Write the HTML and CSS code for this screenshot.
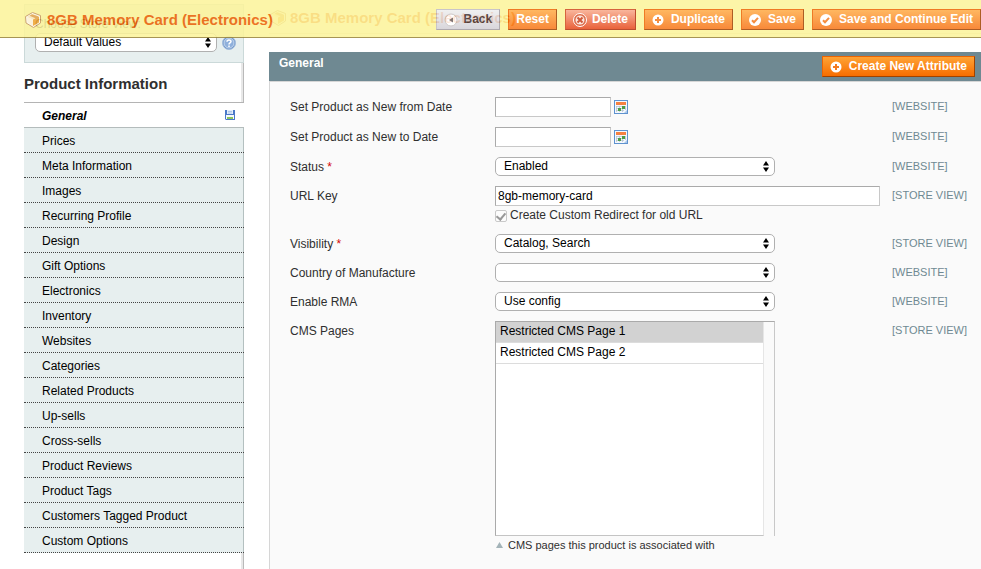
FILE: index.html
```html
<!DOCTYPE html>
<html lang="en">
<head>
<meta charset="utf-8">
<title>8GB Memory Card (Electronics)</title>
<link rel="stylesheet" href="styles.css">
</head>
<body>
<svg class="defs" aria-hidden="true">
  <symbol id="box" viewBox="0 0 18 18">
    <path d="M8.500 1.500l8 3v7.500l-7 4.500-7.500-4.500L1.500 5.500z" fill="#fff8e6" stroke="#c9995a"/>
    <path d="M3 6l5.500-3L15 5.500 9 8.500z" fill="#fbe6b8"/>
    <path d="M3 6l6 2.500v6.500l-5.500-3.500z" fill="#fff3d8"/>
    <path d="M9 8.500l6-3v6L9 15z" fill="#f0a530"/>
    <path d="M5.500 4.700l6 2.500v2.500l2.500-1.300V5.200L8 3.200z" fill="#e3a24a"/>
  </symbol>
  <symbol id="plus" viewBox="0 0 12 12">
    <circle cx="6" cy="6" r="5.500" fill="#fff"/>
    <path d="M6 3v6M3 6h6" stroke="#f47b20" stroke-width="2"/>
  </symbol>
  <symbol id="check" viewBox="0 0 12 12">
    <circle cx="6" cy="6" r="6" fill="#fff"/>
    <path d="M3 6.200l2 2L9 3.800" fill="none" stroke="#f47b20" stroke-width="2"/>
  </symbol>
  <symbol id="cross" viewBox="0 0 14 14">
    <circle cx="7" cy="7" r="6.500" fill="#d9532c" stroke="#fff"/>
    <circle cx="7" cy="7" r="4.500" fill="#fbe3da"/>
    <path d="M4.500 4.500l5 5M9.500 4.500l-5 5" stroke="#c8401c" stroke-width="2"/>
  </symbol>
  <symbol id="back" viewBox="0 0 14 14">
    <circle cx="7" cy="7" r="6" fill="#fff" stroke="#c5bfbf"/>
    <path d="M9 4.500v5L5 7z" fill="#6d6262"/>
  </symbol>
  <symbol id="calendar" viewBox="0 0 14 14">
    <path d="M0 0h14v14H0z" fill="#5f92cf"/>
    <path d="M1 1h12v12H1z" fill="#f4f8fd"/>
    <path d="M10 13l3-3v3z" fill="#a9c8ea"/>
    <path d="M2 2h10v3H2z" fill="#f58142"/>
    <path d="M2 6.500h10M2 8.500h10M2 10.500h8M2.500 6v6M5.500 6v6M8.500 6v6M11.500 6v4" stroke="#b4bfce" stroke-width=".7"/>
    <path d="M8 6h3v3H8zM4 8h3v3H4z" fill="#4f9d45"/>
  </symbol>
  <symbol id="arrows" viewBox="0 0 6 11">
    <path d="M3 0l3 4.500H0zM3 11l3-4.500H0z" fill="#000"/>
  </symbol>
</svg>

<header class="toolbar">
  <h1 class="title"><svg class="i18"><use href="#box"/></svg>8GB Memory Card (Electronics)</h1>
  <div class="actions">
    <button class="btn btn-back" type="button"><svg class="i14"><use href="#back"/></svg>Back</button>
    <button class="btn" type="button">Reset</button>
    <button class="btn btn-delete" type="button"><svg class="i14"><use href="#cross"/></svg>Delete</button>
    <button class="btn btn-icon" type="button"><svg class="i12"><use href="#plus"/></svg>Duplicate</button>
    <button class="btn btn-icon" type="button"><svg class="i12"><use href="#check"/></svg>Save</button>
    <button class="btn btn-icon" type="button"><svg class="i12"><use href="#check"/></svg>Save and Continue Edit</button>
  </div>
</header>

<div class="page">
  <aside class="sidebar">
    <div class="switcher">
      <label for="store">Choose Store View:</label>
      <div class="switcher-row">
        <span class="select"><select id="store"><option>Default Values</option></select><svg class="arrows"><use href="#arrows"/></svg></span>
        <svg class="i14" viewBox="0 0 14 14"><circle cx="7" cy="7" r="6.500" fill="#6d94c9" stroke="#a3bcdc"/><circle cx="7" cy="7" r="5" fill="#8fb0dc" stroke="#d5e3f3" stroke-width=".8"/><path d="M5 5.700C5 3.400 9 3.400 9 5.600 9 7 7 6.900 7 8.400M7 9.600V11" fill="none" stroke="#fff" stroke-width="1.500"/></svg>
      </div>
    </div>
    <div class="tabs">
      <h2>Product Information</h2>
      <ul>
        <li class="active"><a href="#general">General</a><svg class="disk" viewBox="0 0 10 10"><path d="M0 0h10v10H1L0 9z" fill="#4a78c8"/><path d="M2 0h6v4H2z" fill="#e4eefb"/><path d="M3 1.500h4M3 3h4" stroke="#8fb0e0" stroke-width=".6"/><path d="M1 5h8v4H1z" fill="#f4f8fd"/><path d="M2 7h6v2H2z" fill="#8cc45c"/></svg></li>
        <li><a href="#prices">Prices</a></li>
        <li><a href="#meta">Meta Information</a></li>
        <li><a href="#images">Images</a></li>
        <li><a href="#recurring">Recurring Profile</a></li>
        <li><a href="#design">Design</a></li>
        <li><a href="#gift">Gift Options</a></li>
        <li><a href="#electronics">Electronics</a></li>
        <li><a href="#inventory">Inventory</a></li>
        <li><a href="#websites">Websites</a></li>
        <li><a href="#categories">Categories</a></li>
        <li><a href="#related">Related Products</a></li>
        <li><a href="#upsells">Up-sells</a></li>
        <li><a href="#crosssells">Cross-sells</a></li>
        <li><a href="#reviews">Product Reviews</a></li>
        <li><a href="#tags">Product Tags</a></li>
        <li><a href="#customers">Customers Tagged Product</a></li>
        <li><a href="#custom">Custom Options</a></li>
      </ul>
    </div>
  </aside>

  <main class="content" id="general">
    <div class="content-header">
      <h3 class="title"><svg class="i18"><use href="#box"/></svg>8GB Memory Card (Electronics)</h3>
    </div>
    <div class="panel-head">
      <h4>General</h4>
      <button class="btn btn-icon btn-strong" type="button"><svg class="i12"><use href="#plus"/></svg>Create New Attribute</button>
    </div>
    <form class="panel">
      <div class="row">
        <label for="from">Set Product as New from Date</label>
        <div class="date"><input type="text" id="from"><svg class="i14"><use href="#calendar"/></svg></div>
        <span class="scope">[WEBSITE]</span>
      </div>
      <div class="row">
        <label for="to">Set Product as New to Date</label>
        <div class="date"><input type="text" id="to"><svg class="i14"><use href="#calendar"/></svg></div>
        <span class="scope">[WEBSITE]</span>
      </div>
      <div class="row">
        <label for="status">Status <em>*</em></label>
        <span class="select"><select id="status"><option>Enabled</option></select><svg class="arrows"><use href="#arrows"/></svg></span>
        <span class="scope">[WEBSITE]</span>
      </div>
      <div class="row">
        <label for="url">URL Key</label>
        <div class="url">
          <input type="text" id="url" value="8gb-memory-card">
          <div class="redirect"><input type="checkbox" id="redirect" checked disabled><label for="redirect">Create Custom Redirect for old URL</label></div>
        </div>
        <span class="scope">[STORE VIEW]</span>
      </div>
      <div class="row">
        <label for="visibility">Visibility <em>*</em></label>
        <span class="select"><select id="visibility"><option>Catalog, Search</option></select><svg class="arrows"><use href="#arrows"/></svg></span>
        <span class="scope">[STORE VIEW]</span>
      </div>
      <div class="row">
        <label for="country">Country of Manufacture</label>
        <span class="select"><select id="country"><option></option></select><svg class="arrows"><use href="#arrows"/></svg></span>
        <span class="scope">[WEBSITE]</span>
      </div>
      <div class="row">
        <label for="rma">Enable RMA</label>
        <span class="select"><select id="rma"><option>Use config</option></select><svg class="arrows"><use href="#arrows"/></svg></span>
        <span class="scope">[WEBSITE]</span>
      </div>
      <div class="row">
        <label for="cms">CMS Pages</label>
        <div>
          <div class="listbox">
            <select id="cms" multiple>
              <option selected>Restricted CMS Page 1</option>
              <option>Restricted CMS Page 2</option>
            </select>
          </div>
          <p class="note"><svg viewBox="0 0 7 6"><path d="M3.500 0L7 6H0z" fill="#a3b3b8"/></svg>CMS pages this product is associated with</p>
        </div>
        <span class="scope">[STORE VIEW]</span>
      </div>
    </form>
  </main>
</div>
</body>
</html>
```
FILE: styles.css
```css
* { box-sizing: border-box; }
html { height: 100%; overflow: hidden; }
body {
  margin: 0;
  height: 100%;
  background: #fff;
  color: #2f2f2f;
  font: 12px/18px "Liberation Sans", Arial, sans-serif;
}
h1, h2, h3, h4, p, ul { margin: 0; padding: 0; }
button, input, select { font: inherit; color: #000; }
svg { display: block; flex: none; }
.defs { position: absolute; width: 0; height: 0; }
.i12 { width: 12px; height: 12px; }
.i14 { width: 14px; height: 14px; }
.i18 { width: 18px; height: 18px; }

/* Floating toolbar above the page */
.toolbar {
  position: fixed;
  top: 0;
  left: 0;
  right: 0;
  z-index: 10;
  display: flex;
  justify-content: space-between;
  height: 38px;
  padding: 9px 0 0 24px;
  background: #fcf49a;
  border-bottom: 1px solid #98843a;
  opacity: .86;
}
.title {
  display: flex;
  align-items: center;
  gap: 5px;
  height: 21px;
  color: #eb5e00;
  font-size: 15px;
  font-weight: bold;
  white-space: nowrap;
}
.actions { display: flex; gap: 8px; }
.btn {
  display: flex;
  align-items: center;
  gap: 5px;
  height: 21px;
  padding: 0 7px;
  border: 1px solid #ed6502;
  border-right-color: #a04300;
  border-bottom-color: #a04300;
  background: linear-gradient(#ffac47, #f7761a);
  color: #fff;
  font-weight: bold;
  line-height: 19px;
  white-space: nowrap;
}
.btn-icon { gap: 7px; }
.btn-strong { background: linear-gradient(#ffa335, #f76d00); }
.btn-delete {
  border-color: #d04a1e #b0300c #b0300c #d04a1e;
  background: linear-gradient(#f8aa8c, #e6491c);
}
.btn-back {
  gap: 6px;
  border-color: #c0bcc0 #a19ba1 #a19ba1 #c0bcc0;
  background: linear-gradient(#eee, #d3d0d6);
  color: #45373a;
}

.page { display: flex; min-height: 100%; }

/* Sidebar */
.sidebar {
  display: flex;
  flex-direction: column;
  flex: none;
  width: 244px;
  padding: 4px 0 0 24px;
}
.switcher {
  padding: 10px 4px 10px 10px;
  border: 1px solid #cbd9d9;
  background: #e7efef;
}
.switcher label { display: block; }
.switcher-row { display: flex; align-items: center; gap: 5px; }
.switcher .select { width: 182px; }
.tabs {
  flex: 1;
  border-right: 1px solid #b9b9b9;
  box-shadow: inset -2px 0 #e8e8e8;
}
.tabs h2 {
  padding: 12px 0 9px;
  font-size: 15px;
  line-height: 18px;
}
.tabs ul { list-style: none; margin-right: -1px; }
.tabs li {
  display: flex;
  align-items: center;
  height: 25px;
  padding: 0 9px 0 18px;
  border-bottom: 1px dotted #444;
  background: #e7efef;
  box-shadow: inset -1px 0 #b4c0c0;
}
.tabs a { flex: 1; padding-top: 2px; color: #000; text-decoration: none; }
.tabs .active {
  height: 26px;
  border-top: 1px solid #b4b4b4;
  border-bottom: 1px solid #b4bcbc;
  background: #fff;
  box-shadow: none;
  font-weight: bold;
  font-style: italic;
}
.disk { width: 10px; height: 10px; }

/* Content */
.content {
  display: flex;
  flex-direction: column;
  flex: 1;
  min-width: 0;
  padding: 8px 0 0 25px;
}
.content-header { height: 26px; margin-bottom: 18px; border-bottom: 1px solid #e8e2d0; }
.content-header .title { height: 20px; gap: 3px; }
.panel-head {
  display: flex;
  justify-content: space-between;
  height: 29px;
  padding: 4px 6px 4px 10px;
  background: #6f8992;
}
.panel-head h4 { color: #fff; font-size: 12px; line-height: 14px; }
.panel {
  flex: 1;
  padding: 10px 0 10px 20px;
  border: 1px solid #d6d6d6;
  border-right: 0;
  background: #fafafa;
}
.row {
  display: grid;
  grid-template-columns: 205px 397px 1fr;
  align-items: start;
  padding: 5px 0;
}
.row > label, .scope { height: 19px; white-space: nowrap; }
.row > label { line-height: 21px; }
.scope { color: #6f8992; font-size: 11px; line-height: 19px; }
em { color: #d40707; font-style: normal; }
input[type="text"] {
  display: block;
  height: 20px;
  padding: 0 2px;
  border: 1px solid;
  border-color: #aaa #c8c8c8 #c8c8c8 #aaa;
  border-radius: 0;
  background: #fff;
}
.date { display: flex; align-items: center; gap: 3px; }
.date input { width: 116px; }
.url input[type="text"] { width: 385px; }
.redirect { display: flex; align-items: center; gap: 3px; height: 18px; }
.redirect input {
  appearance: none;
  display: grid;
  place-items: center;
  width: 12px;
  height: 12px;
  margin: 2px 0 0;
  border: 1px solid #c9c9c9;
  border-radius: 2px;
  background: #fcfcfc;
}
.redirect input::after {
  content: "";
  width: 4px;
  height: 7px;
  margin-bottom: 2px;
  border: solid #999;
  border-width: 0 2px 2px 0;
  transform: rotate(40deg);
}
.select { position: relative; display: block; width: 280px; }
.select select {
  appearance: none;
  display: block;
  width: 100%;
  height: 19px;
  padding: 0 20px 1px 8px;
  border: 1px solid #b0b0b0;
  border-radius: 5px;
  background: #fff;
  line-height: 16px;
}
.arrows {
  position: absolute;
  top: 4px;
  right: 6px;
  width: 6px;
  height: 11px;
  pointer-events: none;
}
.listbox {
  width: 280px;
  border-top: 1px solid #aaa;
  border-right: 1px solid #c8c8c8;
}
.listbox select {
  display: block;
  width: 269px;
  height: 214px;
  padding: 0;
  border: 1px solid;
  border-color: transparent #e6e6e6 #c4c4c4 #aaa;
  border-top: 0;
  border-radius: 0;
  background: #fff;
  outline: 0;
  overflow: hidden;
}
.listbox option {
  height: 21px;
  min-height: 21px;
  padding: 2px 4px 0;
  border-bottom: 1px solid #dcdcdc;
}
.listbox option:checked { background: linear-gradient(#d2d2d2, #d2d2d2); color: #000; }
.note {
  display: flex;
  align-items: center;
  gap: 5px;
  padding-left: 1px;
  font-size: 11px;
}
.note svg { width: 7px; height: 6px; }
```
